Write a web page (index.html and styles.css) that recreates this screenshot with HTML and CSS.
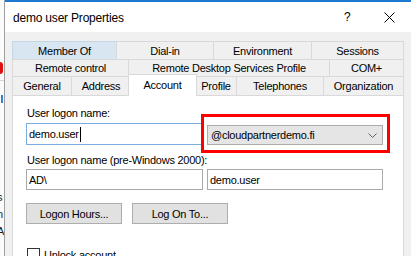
FILE: index.html
```html
<html>

<head>
    <meta name="viewport" content="width=device-width, initial-scale=1">
    <link rel="stylesheet" href="styles.css">
</head>

<body>
    <div class="behind">
        <div class="behind-icon"></div>
        <div class="behind-line"></div>
        <div class="behind-mark"></div>
        <div class="behind-text">
            <div>s</div>
            <div>n</div>
            <div>A</div>
        </div>
    </div>
    <div class="dialog">
        <div class="titlebar">
            <div class="title">demo user Properties</div>
            <div class="help">?</div>
            <div class="close">
                <svg width="11" height="11" viewBox="0 0 11 11">
                    <path d="M0.5 0.5 L10.5 10.5 M10.5 0.5 L0.5 10.5" stroke="#000" stroke-width="1" fill="none" />
                </svg>
            </div>
        </div>
        <div class="dialog-body">
            <div class="tabs">
                <div class="tab-row row1">
                    <div class="tab hover">Member Of</div>
                    <div class="tab">Dial-in</div>
                    <div class="tab">Environment</div>
                    <div class="tab">Sessions</div>
                </div>
                <div class="tab-row row2">
                    <div class="tab">Remote control</div>
                    <div class="tab">Remote Desktop Services Profile</div>
                    <div class="tab">COM+</div>
                </div>
                <div class="tab-row row3">
                    <div class="tab">General</div>
                    <div class="tab">Address</div>
                    <div class="tab selected">Account</div>
                    <div class="tab">Profile</div>
                    <div class="tab">Telephones</div>
                    <div class="tab">Organization</div>
                </div>
            </div>
            <div class="panel">
                <div class="label">User logon name:</div>
                <div class="field-row first">
                    <div class="textbox focused">demo.user<span class="caret"></span></div>
                    <div class="combo">
                        <span>@cloudpartnerdemo.fi</span>
                        <svg width="9" height="5" viewBox="0 0 9 5">
                            <polyline points="0.5,0.5 4.5,4.5 8.5,0.5" stroke="#606060" stroke-width="1" fill="none" />
                        </svg>
                    </div>
                </div>
                <div class="label second">User logon name (pre-Windows 2000):</div>
                <div class="field-row">
                    <div class="textbox">AD\</div>
                    <div class="textbox right">demo.user</div>
                </div>
                <div class="buttons">
                    <div class="button">Logon Hours...</div>
                    <div class="button">Log On To...</div>
                </div>
                <div class="check-row">
                    <div class="checkbox"></div>
                    <div>Unlock account</div>
                </div>
                <div class="highlight"></div>
            </div>
        </div>
    </div>
</body>

</html>
```

FILE: styles.css
```css
body {
    margin: 0;
    display: flex;
    height: 256px;
    overflow: hidden;
    background-color: #fff;
    font-family: 'Liberation Sans', Arial, sans-serif;
    font-size: 11px;
    letter-spacing: -0.25px;
    color: #000;
}

.behind {
    width: 4px;
    flex-shrink: 0;
    overflow: hidden;
    background-color: #fbfbfb;
    border-right: 1px solid #a0a0a0;
}

.behind-icon {
    width: 3px;
    height: 12px;
    margin-top: 62px;
    background-color: #e01010;
    border-radius: 0 3px 3px 0;
}

.behind-line {
    height: 1px;
    margin-top: 6px;
    background-color: #c8d8e8;
}

.behind-mark {
    width: 2px;
    height: 8px;
    margin-top: 14px;
    margin-left: 1px;
    background-color: #3c7fd0;
}

.behind-text {
    margin-top: 86px;
    margin-left: -3px;
    font-size: 11px;
    line-height: 17px;
    color: #222;
}

.dialog {
    flex: 1;
    display: flex;
    flex-direction: column;
    border-top: 2px solid #1c7bd0;
}

.titlebar {
    height: 30px;
    flex-shrink: 0;
    display: flex;
    align-items: center;
    background-color: #fff;
    padding-left: 8px;
}

.title {
    flex: 1;
    font-size: 12px;
    letter-spacing: -0.2px;
    padding-top: 1px;
}

.help {
    width: 10px;
    font-size: 12px;
    margin-right: 30px;
}

.close {
    width: 11px;
    height: 11px;
    margin-right: 16px;
}

.close svg {
    display: block;
}

.dialog-body {
    flex: 1;
    background-color: #f0f0f0;
    padding: 9px 0 0 7px;
    display: flex;
    flex-direction: column;
}

.tabs {
    width: 392px;
}

.tab-row {
    display: grid;
}

.row1 {
    grid-template-columns: 104px 97px 98px 93px;
    height: 18px;
}

.row2 {
    grid-template-columns: 116px 201px 75px;
    height: 17px;
}

.row3 {
    grid-template-columns: 59px 59px 65px 41px 87px 81px;
    height: 19px;
}

.tab {
    border: 1px solid #d9d9d9;
    border-bottom: none;
    margin-right: -1px;
    display: flex;
    align-items: center;
    justify-content: center;
    white-space: nowrap;
    background-color: #f0f0f0;
}

.row1 .tab:last-child,
.row2 .tab:last-child,
.row3 .tab:last-child {
    margin-right: 0;
}

.tab.hover {
    background-color: #d8e6f2;
    border-color: #c4d6e6;
}

.tab.selected {
    background-color: #fff;
    margin: -2px -2px -1px -2px;
    padding-bottom: 2px;
    position: relative;
    z-index: 1;
}

.panel {
    width: 392px;
    flex: 1;
    background-color: #fff;
    border: 1px solid #d9d9d9;
    box-sizing: border-box;
    padding: 10px 0 0 13px;
    position: relative;
}

.label {
    line-height: 15px;
    margin-bottom: 2px;
    margin-left: 1px;
}

.label.second {
    margin-top: 8px;
    margin-bottom: 1px;
}

.field-row {
    display: flex;
    align-items: flex-end;
    height: 21px;
}

.field-row.first {
    height: 22px;
}

.textbox {
    width: 177px;
    height: 21px;
    box-sizing: border-box;
    border: 1px solid #a9a9a9;
    padding-left: 2px;
    display: flex;
    align-items: center;
}

.textbox.focused {
    border-color: #7aaee2;
    height: 22px;
}

.textbox.right {
    width: 176px;
    margin-left: 4px;
}

.caret {
    width: 1px;
    height: 15px;
    background-color: #000;
    margin-left: 1px;
}

.combo {
    width: 176px;
    height: 20px;
    box-sizing: border-box;
    margin-left: 4px;
    border: 1px solid #acacac;
    background-color: #e5e5e5;
    display: flex;
    align-items: center;
    justify-content: space-between;
    padding: 0 5px 0 3px;
}

.combo svg {
    display: block;
}

.buttons {
    display: flex;
    gap: 10px;
    margin-top: 13px;
}

.button {
    width: 96px;
    height: 21px;
    box-sizing: border-box;
    border: 1px solid #adadad;
    background-color: #e1e1e1;
    display: flex;
    align-items: center;
    justify-content: center;
}

.check-row {
    display: flex;
    align-items: center;
    gap: 4px;
    margin-top: 24px;
    margin-left: 1px;
}

.checkbox {
    width: 13px;
    height: 13px;
    box-sizing: border-box;
    border: 1px solid #333;
    background-color: #fff;
}

.highlight {
    position: absolute;
    left: 188px;
    top: 18px;
    width: 189px;
    height: 39px;
    box-sizing: border-box;
    border: 3px solid #ff0000;
}
```
